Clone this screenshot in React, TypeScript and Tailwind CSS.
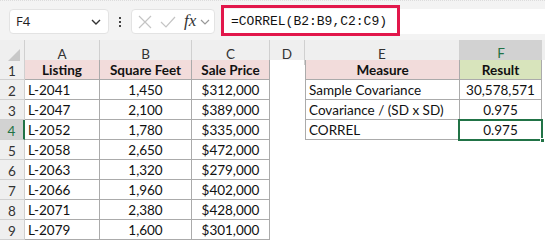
import React from 'react';

const cols = 'grid grid-cols-[25px_75px_92px_78px_35px_155px_82px_1fr]';

const listings = [
  ['L-2041', '1,450', '$312,000'],
  ['L-2047', '2,100', '$389,000'],
  ['L-2052', '1,780', '$335,000'],
  ['L-2058', '2,650', '$472,000'],
  ['L-2063', '1,320', '$279,000'],
  ['L-2066', '1,960', '$402,000'],
  ['L-2071', '2,380', '$428,000'],
  ['L-2079', '1,600', '$301,000'],
];

const measures = [
  ['Sample Covariance', '30,578,571'],
  ['Covariance / (SD x SD)', '0.975'],
  ['CORREL', '0.975'],
];

const cell = 'h-[20px] border-r border-b border-[#ababab] flex items-center leading-none pt-[3px]';

const App: React.FC = () => {
  return (
    <div className="w-[545px] h-[242px] overflow-hidden bg-white text-[13.5px] text-[#111] font-['Lato',sans-serif]">
      {/* formula bar */}
      <div className="h-[40px] bg-[#f3f3f3] flex items-start pt-[8px] pl-[9px] border-t border-dotted border-[#dcdcdc]">
        <div className="w-[100px] h-[25px] bg-white rounded-[4px] border border-[#e3e3e3] flex items-center justify-between pl-[6px] pr-[6px]">
          <span className="font-['Open_Sans',sans-serif] text-[13px] text-[#222]">F4</span>
          <svg width="12" height="8" viewBox="0 0 12 8">
            <path d="M2 2 L6 6 L10 2" fill="none" stroke="#333" strokeWidth="1.4" />
          </svg>
        </div>
        <div className="w-[22px] h-[25px] flex flex-col items-center justify-center gap-[2px]">
          <span className="w-[2px] h-[2px] bg-[#444]" />
          <span className="w-[2px] h-[2px] bg-[#444]" />
          <span className="w-[2px] h-[2px] bg-[#444]" />
        </div>
        <div className="w-[84px] h-[25px] bg-white rounded-[4px] border border-[#e3e3e3] flex items-center pl-[6px] gap-[8px]">
          <svg width="14" height="14" viewBox="0 0 14 14">
            <path d="M1 1 L13 13 M13 1 L1 13" stroke="#c4c4c4" strokeWidth="1.2" />
          </svg>
          <svg width="16" height="14" viewBox="0 0 16 14">
            <path d="M1 7 L6 12 L15 2" fill="none" stroke="#c4c4c4" strokeWidth="1.2" />
          </svg>
          <span className="font-['Liberation_Serif',serif] italic text-[17px] text-[#333] leading-none -mt-[2px]">fx</span>
          <svg width="10" height="8" viewBox="0 0 10 8" className="-ml-[4px]">
            <path d="M1 2 L5 6 L9 2" fill="none" stroke="#999" strokeWidth="1.2" />
          </svg>
        </div>
        <div className="ml-[6px] flex-1 h-[25px] bg-white flex items-center relative">
          <div className="absolute left-0 top-[-4px] w-[179px] h-[31px] border-[3px] border-[#e2174b]" />
          <span className="pl-[10px] font-['Liberation_Mono',monospace] text-[13px] text-[#111]">=CORREL(B2:B9,C2:C9)</span>
        </div>
      </div>

      {/* column headers */}
      <div className={`${cols} h-[20px] bg-[#efefef] text-[#333]`}>
        <div className="border-r border-[#d0d0d0] relative">
          <svg width="14" height="14" viewBox="0 0 14 14" className="absolute right-[3px] bottom-[3px]">
            <path d="M13 1 L13 13 L1 13 Z" fill="#c8c8c8" />
          </svg>
        </div>
        {['A', 'B', 'C', 'D', 'E'].map((c) => (
          <div key={c} className="border-r border-[#d0d0d0] flex items-center justify-center pt-[2px]">
            {c}
          </div>
        ))}
        <div className="bg-[#d2d2d2] border-b-2 border-[#217346] text-[#217346] flex items-center justify-center pt-[3px]">F</div>
        <div />
      </div>

      {/* rows */}
      {Array.from({ length: 9 }).map((_, i) => {
        const r = i + 1;
        const sel = r === 4;
        const m = r >= 2 && r <= 4 ? measures[r - 2] : null;
        return (
          <div key={r} className={`${cols} h-[20px]`}>
            <div
              className={`h-[20px] flex items-center justify-center pt-[3px] border-b border-[#d0d0d0] ${
                sel ? 'bg-[#d2d2d2] border-r-2 border-r-[#217346] text-[#217346]' : 'bg-[#efefef] border-r border-r-[#d0d0d0] text-[#333]'
              }`}
            >
              {r}
            </div>
            {r === 1 ? (
              <>
                <div className={`${cell} justify-center font-bold bg-[#f2dcdb]`}>Listing</div>
                <div className={`${cell} justify-center font-bold bg-[#f2dcdb]`}>Square Feet</div>
                <div className={`${cell} justify-center font-bold bg-[#f2dcdb]`}>Sale Price</div>
              </>
            ) : (
              <>
                <div className={`${cell} pl-[3px]`}>{listings[r - 2][0]}</div>
                <div className={`${cell} justify-center`}>{listings[r - 2][1]}</div>
                <div className={`${cell} justify-center`}>{listings[r - 2][2]}</div>
              </>
            )}
            <div />
            {r === 1 ? (
              <>
                <div className={`${cell} border-l justify-center font-bold bg-[#f2dcdb]`}>Measure</div>
                <div className={`${cell} justify-center font-bold bg-[#d8e4bc]`}>Result</div>
              </>
            ) : m ? (
              <>
                <div className={`${cell} border-l pl-[3px]`}>{m[0]}</div>
                <div className={`${cell} justify-center relative`}>
                  {m[1]}
                  {sel && (
                    <>
                      <div className="absolute left-[-2px] top-[-1px] right-[-2px] bottom-[-2px] border-2 border-[#217346]" />
                      <div className="absolute right-[-4px] bottom-[-4px] w-[5px] h-[5px] bg-[#217346] border border-white" />
                    </>
                  )}
                </div>
              </>
            ) : (
              <>
                <div />
                <div />
              </>
            )}
            <div />
          </div>
        );
      })}
    </div>
  );
};

export default App;
